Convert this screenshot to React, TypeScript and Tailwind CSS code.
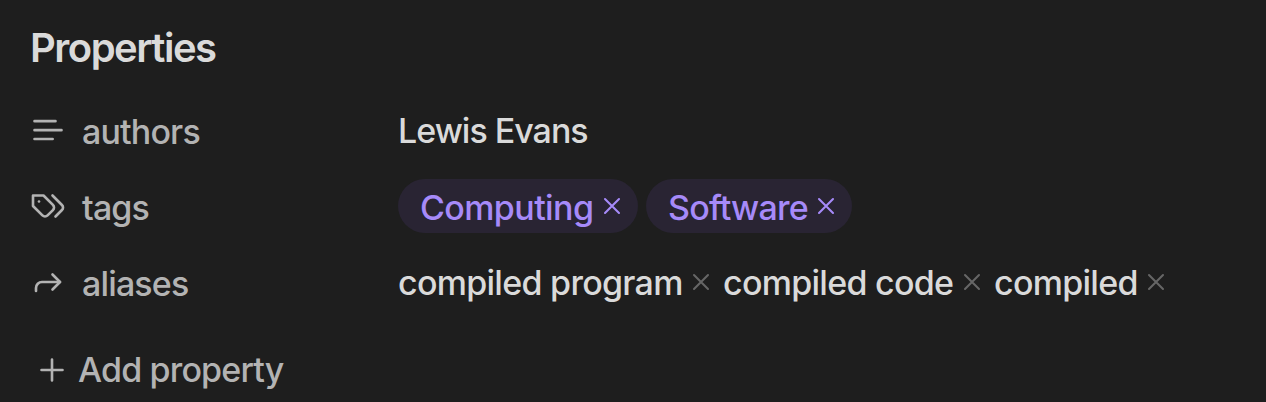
import type { ReactNode } from "react";

function Icon({ children, className }: { children: ReactNode; className: string }) {
  return (
    <svg
      viewBox="0 0 24 24"
      fill="none"
      stroke="currentColor"
      strokeWidth="1.75"
      strokeLinecap="round"
      strokeLinejoin="round"
      className={className}
    >
      {children}
    </svg>
  );
}

function Close({ className }: { className: string }) {
  return (
    <Icon className={`size-7 shrink-0 ${className}`}>
      <path d="M18 6 6 18M6 6l12 12" />
    </Icon>
  );
}

function Row({ icon, name, children }: { icon: ReactNode; name: string; children: ReactNode }) {
  return (
    <div className="flex h-[76px] items-center">
      <div className="flex w-[368px] shrink-0 items-center text-[#b3b3b3]">
        <Icon className="size-9 shrink-0">{icon}</Icon>
        <span className="ml-4 pt-1 tracking-[-0.85px]">{name}</span>
      </div>
      {children}
    </div>
  );
}

function Tag({ name, className }: { name: string; className: string }) {
  return (
    <span className={`flex h-[54px] items-center rounded-full bg-[#292433] pl-[22px] text-[#a68af9] ${className}`}>
      <span className="flex-1 pt-1">{name}</span>
      <Close className="mr-3" />
    </span>
  );
}

function Alias({ name, className }: { name: string; className: string }) {
  return (
    <span className={`flex shrink-0 items-center ${className}`}>
      <span className="flex-1 pt-0.5 tracking-[-0.72px]">{name}</span>
      <Close className="text-[#666666]" />
    </span>
  );
}

export default function App() {
  return (
    <main className="h-[402px] w-[1266px] overflow-hidden whitespace-nowrap bg-[#1e1e1e] pl-[30px] font-['Inter',sans-serif] text-[34px] font-[450] leading-none text-[#dadada]">
      <h2 className="flex h-[92px] items-center pt-1 text-[40px] font-semibold tracking-[-1.5px]">Properties</h2>
      <Row name="authors" icon={<path d="M17 6.1H3M21 12.1H3M15.1 18H3" />}>
        <span className="pt-0.5 tracking-[-1px]">Lewis Evans</span>
      </Row>
      <Row
        name="tags"
        icon={
          <>
            <path d="M9 5H2v7l6.29 6.29c.94.94 2.48.94 3.42 0l3.58-3.58c.94-.94.94-2.48 0-3.42L9 5Z" />
            <path d="M6 9.01V9" />
            <path d="m15 5 6.3 6.3a2.4 2.4 0 0 1 0 3.4L17 19" />
          </>
        }
      >
        <div className="flex gap-2">
          <Tag name="Computing" className="w-[240px] tracking-[-0.6px]" />
          <Tag name="Software" className="w-[206px] tracking-[-0.8px]" />
        </div>
      </Row>
      <Row
        name="aliases"
        icon={
          <>
            <path d="m15 17 5-5-5-5" />
            <path d="M4 18v-2a4 4 0 0 1 4-4h12" />
          </>
        }
      >
        <div className="flex">
          <Alias name="compiled program" className="w-[317px]" />
          <Alias name="compiled code" className="ml-2 w-[263px]" />
          <Alias name="compiled" className="ml-2 w-[176px]" />
        </div>
      </Row>
      <button className="mt-[32px] flex items-center pl-1 text-[#b3b3b3]">
        <Icon className="size-9">
          <path d="M5 12h14M12 5v14" />
        </Icon>
        <span className="ml-2 tracking-[-0.84px]">Add property</span>
      </button>
    </main>
  );
}
